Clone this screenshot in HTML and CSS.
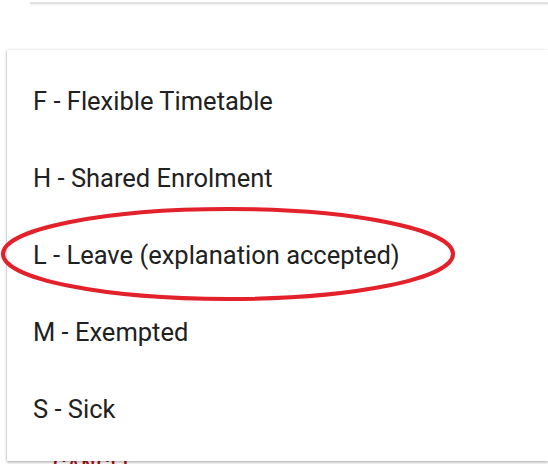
FILE: index.html
```html
<!DOCTYPE html>
<html lang="en">
<head>
  <meta charset="UTF-8" />
  <meta name="viewport" content="width=device-width, initial-scale=1.0"/>
  <title>Absence codes</title>
  <link rel="stylesheet" href="styles.css">
</head>
<body>
  <div class="dialog">
    <div class="dialog-edge"></div>
    <div class="dialog-body"></div>
    <div class="dialog-actions">
      <button class="dialog-btn">Cancel</button>
    </div>
  </div>

  <ul class="code-menu">
    <li class="code-item">F - Flexible Timetable</li>
    <li class="code-item">H - Shared Enrolment</li>
    <li class="code-item">L - Leave (explanation accepted)</li>
    <li class="code-item">M - Exempted</li>
    <li class="code-item">S - Sick</li>
  </ul>

  <svg class="mark" width="548" height="464" viewBox="0 0 548 464">
    <ellipse cx="228" cy="254" rx="225" ry="45" fill="none" stroke="#e3212b" stroke-width="4"/>
  </svg>
</body>
</html>
```

FILE: styles.css
```css
html, body {
  margin: 0;
  background: #fff;
  font-family: Roboto, 'Liberation Sans', Arial, sans-serif;
  overflow: hidden;
}
.dialog {
  height: 464px;
  display: flex;
  flex-direction: column;
}
.dialog-edge {
  margin: 2px 0 0 30px;
  height: 2px;
  background: #e2e2e2;
  box-shadow: 0 1px 1px #f0f0f0;
}
.dialog-body {
  flex: 1;
}
.dialog-actions {
  padding: 0 0 0 40px;
  height: 7px;
}
.dialog-btn {
  background: none;
  border: none;
  padding: 0 13px;
  margin-top: -5px;
  color: #a8141c;
  font-family: Roboto, 'Liberation Sans', Arial, sans-serif;
  font-size: 20px;
  font-weight: 500;
  letter-spacing: 1px;
  text-transform: uppercase;
}
.code-menu {
  position: absolute;
  left: 7px;
  top: 50px;
  right: 0;
  height: 411px;
  margin: 0;
  padding: 12px 0 0;
  list-style: none;
  background: #fff;
  box-shadow: 0 2px 2px rgba(0, 0, 0, 0.22),
              -1px 0 2px rgba(0, 0, 0, 0.12),
              0 -1px 2px rgba(0, 0, 0, 0.03);
  box-sizing: border-box;
}
.code-item {
  height: 77px;
  display: flex;
  align-items: center;
  padding-left: 26px;
  font-size: 25.5px;
  color: #212121;
}
.mark {
  position: absolute;
  left: 0;
  top: 0;
  pointer-events: none;
}
```
